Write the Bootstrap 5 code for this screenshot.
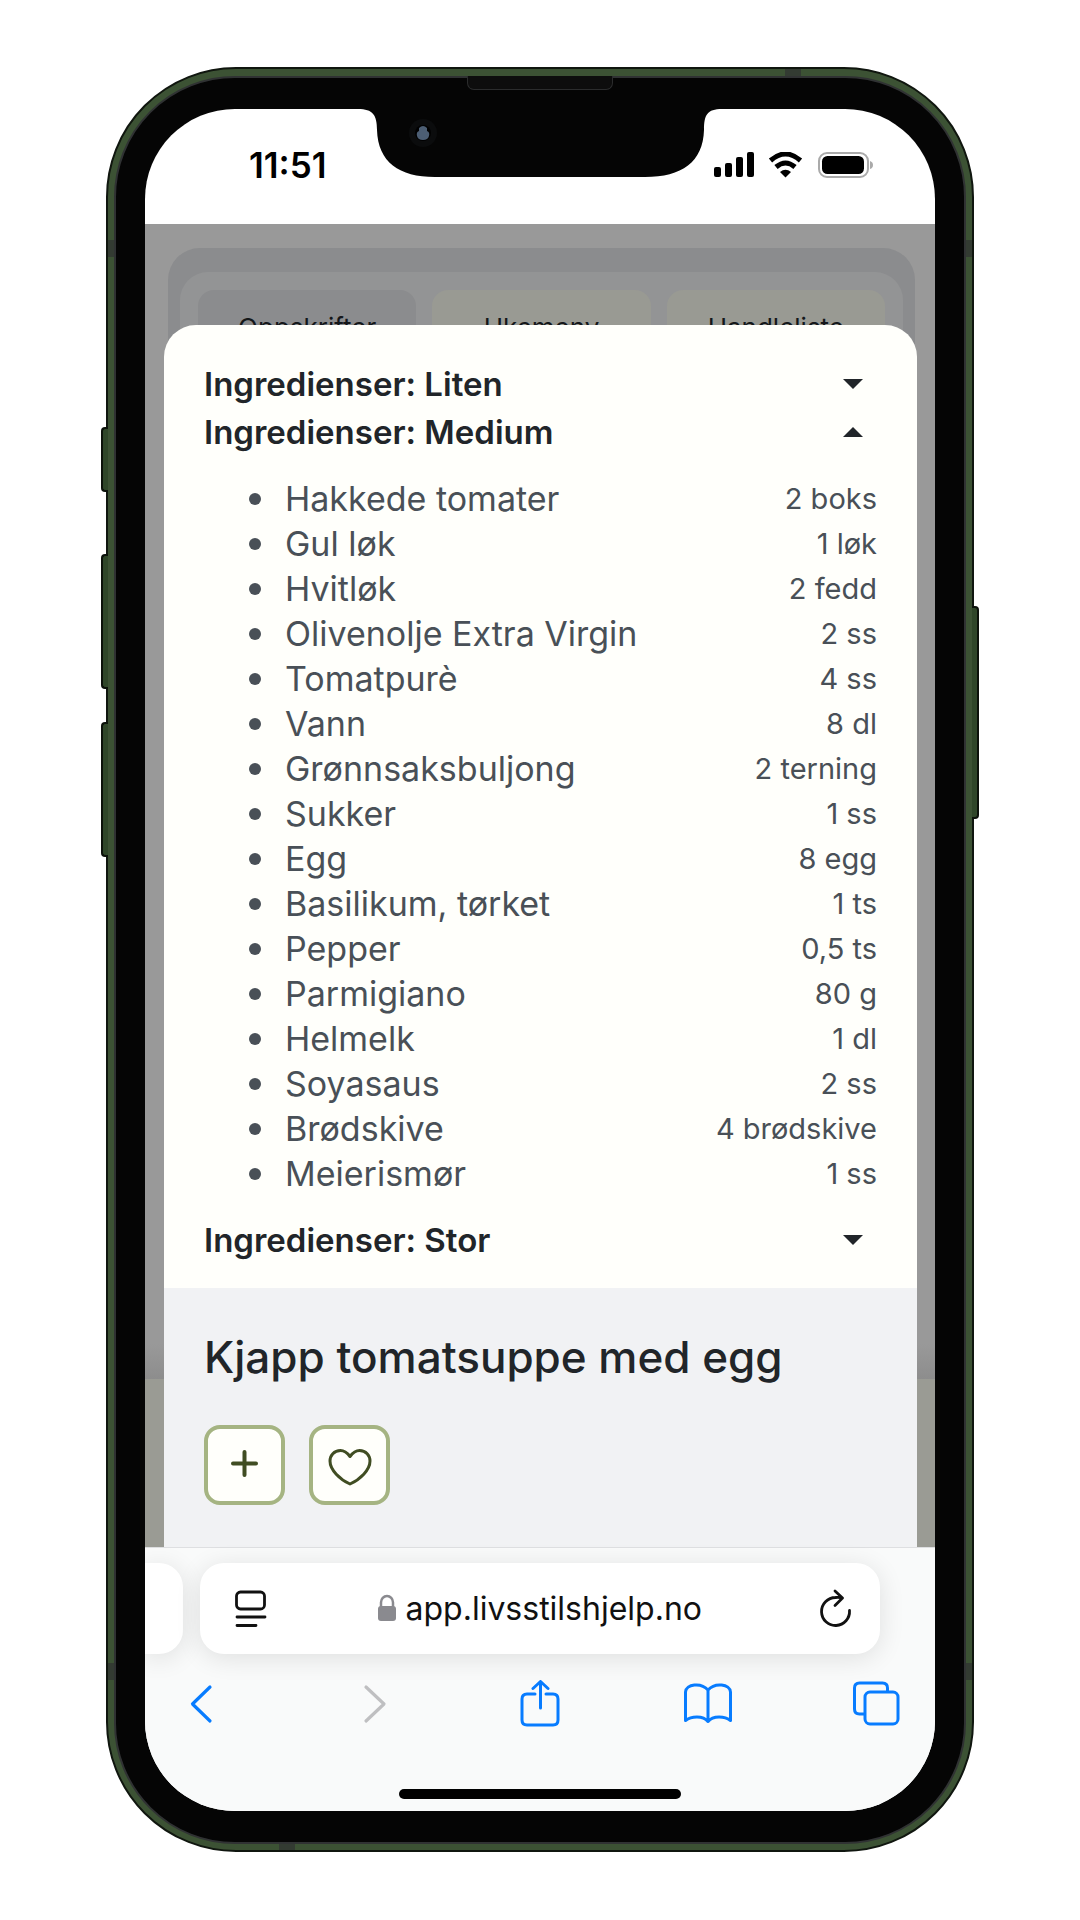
<!DOCTYPE html>
<html lang="no">
<head>
<meta charset="utf-8">
<meta name="viewport" content="width=device-width, initial-scale=1">
<title>Livsstilshjelp – Kjapp tomatsuppe med egg</title>
<link rel="stylesheet" href="https://cdn.jsdelivr.net/npm/bootstrap@5.3.0/dist/css/bootstrap.min.css">
<style>
  body { background: #fff; font-family: Inter, "Liberation Sans", sans-serif; color: #212529; }
  .stage { padding: 67px 106px 68px; }
  svg { display: block; }

  /* Phone body */
  .phone { background: #3c5234; border: 2px solid #10160f; border-radius: 130px; padding: 7px 6px 6px; }
  .bezel { background: #050505; border: 2px solid #303233; border-radius: 121px; padding: 31px 29px; }
  .screen { background: #fff; border-radius: 90px; }
  .side-key { width: 7px; background: #2f4629; border: 2px solid #0c120b; }
  .key-left { right: 100%; border-radius: 4px 0 0 4px; border-right: 0; }
  .key-right { left: 100%; border-radius: 0 4px 4px 0; border-left: 0; }
  .key-mute { top: 358px; height: 65px; }
  .key-up { top: 485px; height: 135px; }
  .key-down { top: 653px; height: 135px; }
  .key-power { top: 537px; height: 213px; }
  .band { background: #333b32; }
  .band-v { width: 6px; height: 17px; }
  .band-h { width: 16px; height: 7px; }
  .band-high { top: 171px; }
  .band-low { bottom: 170px; }
  .band-right { right: 171px; }
  .band-left { left: 171px; }
  .speaker { top: -2px; width: 146px; height: 14px; background: #0d0d0d; border: 1px solid #2b2c2d; border-top: 0; border-radius: 0 0 7px 7px; }
  .notch { top: -1px; }

  /* Status bar */
  .status { height: 115px; padding: 0 62px 4px 104px; }
  .clock { font-size: 35px; font-weight: 600; line-height: 40px; color: #000; }

  /* Page under the dialog */
  .dimmed { background: linear-gradient(#999 0, #999 1120px, #8d8d8d 1155px, #9a9b94 1155px); }
  .dim-card { margin: 24px 20px 0 23px; padding: 24px 12px; height: 140px; background: #8b8c8e; border-radius: 32px; }
  .dim-tabs { padding: 18px; gap: 16px; background: #939495; border-radius: 28px; }
  .dim-tab { flex: 1 1 0; padding: 20px 0; border: 0; border-radius: 16px; background: #999a93; color: #14171a; font-size: 26px; line-height: 36px; }
  .dim-tab.current { background: #8b8c8e; }

  /* Dialog */
  .sheet { margin: 101px 18px 0 19px; background: #fffffb; border-radius: 32px 32px 0 0; }
  .sheet-top { padding: 35px 40px 24px; }
  .size-toggle { width: 100%; padding: 0 14px 0 0; border: 0; background: none; color: #212529; font-size: 33px; font-weight: 600; line-height: 48px; }
  .caret { width: 0; height: 0; border: 10px solid transparent; border-bottom-width: 0; border-top-color: #212529; }
  .size-toggle[aria-expanded="true"] .caret { border-bottom: 10px solid #212529; border-top-width: 0; }
  .ingredients { margin: 20px 0; color: #495057; font-size: 34px; line-height: 45px; }
  .ingredients li { padding-left: 45px; }
  .ingredients li::before { content: ""; width: 12px; height: 12px; margin-right: 24px; border-radius: 50%; background: #495057; }
  .amount { font-size: 29px; }
  .sheet-info { padding: 45px 40px 42px; background: #f1f2f4; }
  .dish { font-size: 44px; font-weight: 500; line-height: 48px; margin-bottom: 44px; }
  .square-btn { width: 81px; height: 80px; border: 4px solid #a5b482; border-radius: 16px; background: #fffffb; color: #404d22; }

  /* Browser bar */
  .browser { background: #f9fafa; border-top: 1px solid #dedfe1; padding: 15px 0 12px; }
  .tab-row { padding-right: 55px; gap: 17px; }
  .prev-tab { width: 38px; background: #fff; border-radius: 0 24px 24px 0; box-shadow: 0 4px 26px rgba(0,0,0,.11); }
  .address { height: 91px; padding: 0 27px 0 34px; background: #fff; border-radius: 24px; box-shadow: 0 4px 26px rgba(0,0,0,.11); }
  .address-input { width: 306px; padding: 0; border: 0; background: none; color: #111; font-size: 32px; line-height: 40px; }
  .plain-btn { padding: 0; border: 0; background: none; color: #111; }
  .tools { padding: 26px 33px 0 30px; }
  .tool { width: 52px; height: 48px; padding: 0; border: 0; background: none; color: #087cff; }
  .tool:disabled { color: #bfbfc1; }
  .home-bar { width: 282px; height: 10px; margin: 61px auto 0; border-radius: 5px; background: #000; }
</style>
</head>
<body>
<main class="stage">
  <div class="phone position-relative">
    <span class="side-key key-left key-mute position-absolute"></span>
    <span class="side-key key-left key-up position-absolute"></span>
    <span class="side-key key-left key-down position-absolute"></span>
    <span class="side-key key-right key-power position-absolute"></span>
    <span class="band band-v band-high position-absolute start-0"></span>
    <span class="band band-v band-high position-absolute end-0"></span>
    <span class="band band-v band-low position-absolute start-0"></span>
    <span class="band band-v band-low position-absolute end-0"></span>
    <span class="band band-h band-right position-absolute top-0"></span>
    <span class="band band-h band-left position-absolute bottom-0"></span>

    <div class="bezel position-relative">
      <span class="speaker position-absolute start-50 translate-middle-x"></span>
      <div class="screen position-relative overflow-hidden">
        <svg class="notch position-absolute start-50 translate-middle-x" width="370" height="70" viewBox="0 0 370 70" aria-hidden="true">
          <path d="M0 0H370V1H367C352 1 349 7 349 22C348 54 327 69 290 69H80C44 69 23 54 22 22C22 7 18 1 3 1H0Z" fill="#050505"/>
          <circle cx="68" cy="25" r="14" fill="#0b0c0d"/>
          <circle cx="68" cy="25" r="8" fill="#000"/>
          <path d="M64 20q4-4 8 0v3q3 1 2 5q-1 4-6 4t-6-4q-1-4 2-5z" fill="#4c5e74"/>
        </svg>

        <header class="status d-flex align-items-center justify-content-between">
          <time class="clock">11:51</time>
          <div class="d-flex align-items-center" aria-hidden="true">
            <svg width="159" height="26" viewBox="0 0 159 26">
              <g fill="#000">
                <rect x="0" y="15" width="7" height="10" rx="2"/><rect x="11" y="11" width="7" height="14" rx="2"/>
                <rect x="22" y="5" width="7" height="20" rx="2"/><rect x="33" y="0" width="7" height="25" rx="2"/>
              </g>
              <g fill="none" stroke="#000" stroke-width="5">
                <path d="M56.500 8.500Q71.500-4.500 86.500 8.500"/><path d="M62 15Q71.500 7 81 15"/>
              </g>
              <path d="M66 20Q71.500 15.500 77 20L71.500 25.500Z" fill="#000"/>
              <rect x="105" y="1" width="49" height="24" rx="8" fill="none" stroke="#aaa" stroke-width="2"/>
              <rect x="108" y="4" width="42" height="18" rx="5.500" fill="#000"/>
              <path d="M156 9q3 1 3 4t-3 4z" fill="#aaa"/>
            </svg>
          </div>
        </header>

        <div class="position-relative overflow-hidden">
          <div class="dimmed position-absolute top-0 start-0 w-100 h-100">
            <div class="dim-card">
              <div class="dim-tabs d-flex">
                <button class="dim-tab current" type="button">Oppskrifter</button>
                <button class="dim-tab" type="button">Ukemeny</button>
                <button class="dim-tab" type="button">Handleliste</button>
              </div>
            </div>
          </div>

          <section class="sheet position-relative overflow-hidden">
            <div class="sheet-top">
              <button class="size-toggle d-flex align-items-center justify-content-between" type="button" aria-expanded="false">Ingredienser: Liten<span class="caret"></span></button>
              <button class="size-toggle d-flex align-items-center justify-content-between" type="button" data-bs-toggle="collapse" data-bs-target="#medium" aria-expanded="true" aria-controls="medium">Ingredienser: Medium<span class="caret"></span></button>
              <div class="collapse show" id="medium">
                <ul class="ingredients list-unstyled">
                  <li class="d-flex align-items-center">Hakkede tomater<span class="amount ms-auto">2 boks</span></li>
                  <li class="d-flex align-items-center">Gul løk<span class="amount ms-auto">1 løk</span></li>
                  <li class="d-flex align-items-center">Hvitløk<span class="amount ms-auto">2 fedd</span></li>
                  <li class="d-flex align-items-center">Olivenolje Extra Virgin<span class="amount ms-auto">2 ss</span></li>
                  <li class="d-flex align-items-center">Tomatpurè<span class="amount ms-auto">4 ss</span></li>
                  <li class="d-flex align-items-center">Vann<span class="amount ms-auto">8 dl</span></li>
                  <li class="d-flex align-items-center">Grønnsaksbuljong<span class="amount ms-auto">2 terning</span></li>
                  <li class="d-flex align-items-center">Sukker<span class="amount ms-auto">1 ss</span></li>
                  <li class="d-flex align-items-center">Egg<span class="amount ms-auto">8 egg</span></li>
                  <li class="d-flex align-items-center">Basilikum, tørket<span class="amount ms-auto">1 ts</span></li>
                  <li class="d-flex align-items-center">Pepper<span class="amount ms-auto">0,5 ts</span></li>
                  <li class="d-flex align-items-center">Parmigiano<span class="amount ms-auto">80 g</span></li>
                  <li class="d-flex align-items-center">Helmelk<span class="amount ms-auto">1 dl</span></li>
                  <li class="d-flex align-items-center">Soyasaus<span class="amount ms-auto">2 ss</span></li>
                  <li class="d-flex align-items-center">Brødskive<span class="amount ms-auto">4 brødskive</span></li>
                  <li class="d-flex align-items-center">Meierismør<span class="amount ms-auto">1 ss</span></li>
                </ul>
              </div>
              <button class="size-toggle d-flex align-items-center justify-content-between" type="button" aria-expanded="false">Ingredienser: Stor<span class="caret"></span></button>
            </div>
            <div class="sheet-info">
              <h1 class="dish">Kjapp tomatsuppe med egg</h1>
              <div class="d-flex gap-4">
                <button class="square-btn d-flex align-items-center justify-content-center" type="button" aria-label="Legg til">
                  <svg width="48" height="48" viewBox="0 0 48 48" fill="none" stroke="currentColor" stroke-width="4" stroke-linecap="round"><path d="M23.500 11V34M12 22.500H35"/></svg>
                </button>
                <button class="square-btn d-flex align-items-center justify-content-center" type="button" aria-label="Favoritt">
                  <svg width="48" height="48" viewBox="0 0 48 48" fill="none" stroke="currentColor" stroke-width="3" stroke-linejoin="round"><path d="M24 15.500C21 11.500 18 9.500 14.500 9.500C8 9.500 4 14.500 4 20C4 29 14 38.500 24 43C34 38.500 44 29 44 20C44 14.500 40 9.500 33.500 9.500C30 9.500 27 11.500 24 15.500Z"/></svg>
                </button>
              </div>
            </div>
          </section>
        </div>

        <footer class="browser position-relative">
          <div class="tab-row d-flex">
            <div class="prev-tab flex-shrink-0"></div>
            <div class="address d-flex align-items-center justify-content-between flex-grow-1">
              <button class="plain-btn" type="button" aria-label="Sidemeny">
                <svg width="34" height="40" viewBox="0 0 34 40" fill="none" stroke="currentColor" stroke-width="2.800" stroke-linecap="round"><rect x="2.500" y="3" width="28" height="17" rx="4"/><path d="M3 28H31M3 36.500H22"/></svg>
              </button>
              <div class="d-flex align-items-center gap-2">
                <svg width="22" height="30" viewBox="0 0 22 30" aria-hidden="true"><rect x="2" y="12" width="18" height="15" rx="3" fill="#8a8a8f"/><path d="M5 13V8.500a6 6.500 0 0 1 12 0V13" fill="none" stroke="#8a8a8f" stroke-width="2.500"/></svg>
                <input class="address-input" type="text" value="app.livsstilshjelp.no" aria-label="Adresse">
              </div>
              <button class="plain-btn" type="button" aria-label="Last inn på nytt">
                <svg width="34" height="40" viewBox="0 0 34 40" fill="none" stroke="currentColor" stroke-width="2.800" stroke-linecap="round" stroke-linejoin="round"><path d="M30.500 21.500A14 14 0 1 1 16.500 8.500Q20 8 23.500 9M16 2L23.500 9L16 16.500"/></svg>
              </button>
            </div>
          </div>
          <nav class="tools d-flex justify-content-between" aria-label="Nettleser">
            <button class="tool" type="button" aria-label="Tilbake"><svg width="52" height="48" viewBox="0 0 52 48" fill="none" stroke="currentColor" stroke-width="3.200" stroke-linecap="round" stroke-linejoin="round"><path d="M35 7L17.500 24L35 41"/></svg></button>
            <button class="tool" type="button" aria-label="Frem" disabled><svg width="52" height="48" viewBox="0 0 52 48" fill="none" stroke="currentColor" stroke-width="3.200" stroke-linecap="round" stroke-linejoin="round"><path d="M22 7L40 24L22 41"/></svg></button>
            <button class="tool" type="button" aria-label="Del"><svg width="52" height="48" viewBox="0 0 52 48" fill="none" stroke="currentColor" stroke-width="3" stroke-linecap="round" stroke-linejoin="round"><path d="M22 14H14Q9 14 9 19V40Q9 45 14 45H40Q45 45 45 40V19Q45 14 40 14H33M27.500 28V1.500M20 8.500L27.500 1.500L35 8.500"/></svg></button>
            <button class="tool" type="button" aria-label="Bokmerker"><svg width="52" height="48" viewBox="0 0 52 48" fill="none" stroke="currentColor" stroke-width="3" stroke-linecap="round" stroke-linejoin="round"><path d="M27 10C20 2 5 4 4.500 12V40.500C10 36 22 35 27 41.500C32 35 44 36 49.500 40.500V12C49 4 34 2 27 10V41.500"/></svg></button>
            <button class="tool" type="button" aria-label="Faner"><svg width="52" height="48" viewBox="0 0 52 48" fill="none" stroke="currentColor" stroke-width="3" stroke-linejoin="round"><rect x="15" y="12" width="33" height="32" rx="5"/><path d="M37.500 12V8Q37.500 3 32.500 3H9.500Q4.500 3 4.500 8V29Q4.500 34 9.500 34H15"/></svg></button>
          </nav>
          <div class="home-bar"></div>
        </footer>
      </div>
    </div>
  </div>
</main>
<script src="https://cdn.jsdelivr.net/npm/bootstrap@5.3.0/dist/js/bootstrap.bundle.min.js"></script>
</body>
</html>
